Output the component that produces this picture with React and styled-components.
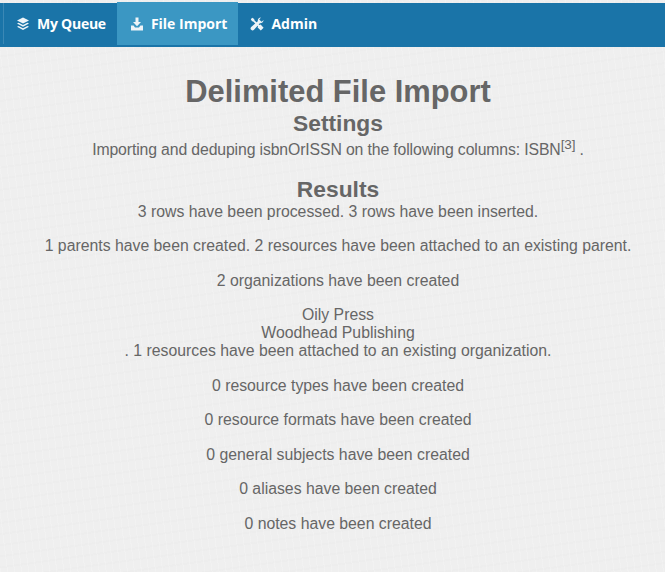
import React from "react"
import styled, { createGlobalStyle } from "styled-components"

const GlobalStyle = createGlobalStyle`
  html, body {
    margin: 0;
    padding: 0;
  }

  body {
    background-color: #efefef;
    font-family: "Liberation Sans", Arial, sans-serif;
    color: #666;
  }
`

const Page = styled.div`
  width: 665px;
  height: 572px;
  overflow: hidden;
  padding-top: 3px;
  box-sizing: border-box;
  background-image:
    repeating-linear-gradient(83deg, rgba(255, 255, 255, 0.16) 0 1px, transparent 1px 7px),
    repeating-linear-gradient(172deg, rgba(0, 0, 0, 0.008) 0 2px, transparent 2px 11px);
`

const NavBar = styled.nav`
  display: flex;
  height: 44px;
  padding-left: 3px;
  box-sizing: border-box;
  background-color: #1a74a8;
`

const NavItem = styled.a`
  display: flex;
  align-items: center;
  gap: 7px;
  height: ${(props) => (props.$active ? "43px" : "41px")};
  margin-top: ${(props) => (props.$active ? "-1px" : "0")};
  padding: 0 11px 0 ${(props) => props.$left}px;
  box-sizing: border-box;
  font-family: "Open Sans", sans-serif;
  font-size: 14px;
  font-weight: 700;
  letter-spacing: ${(props) => (props.$first ? "-0.25px" : "0")};
  color: #fff;
  background-color: ${(props) => (props.$active ? "#3b97c3" : "transparent")};
  border-left: ${(props) => (props.$first ? "1px solid #3b88b5" : "0")};

  svg {
    width: 14px;
    height: 14px;
    fill: #eef4f8;
    flex-shrink: 0;
  }
`

const Content = styled.main`
  text-align: center;
  padding: 27px 0 0 11px;
`

const Title = styled.h1`
  margin: 0;
  font-size: 30.9px;
  line-height: 36px;
  font-weight: 700;
`

const SectionTitle = styled.h2`
  margin: 0;
  font-size: 22.8px;
  line-height: ${(props) => props.$lineHeight}px;
  font-weight: 700;
`

const Paragraph = styled.p`
  margin: 0 0 16.5px;
  font-size: 15.8px;
  line-height: 18px;
  letter-spacing: ${(props) => (props.$tight ? "-0.13px" : "0")};
`

const Sup = styled.sup`
  font-size: 13.5px;
`

const LayersIcon = () => (
  <svg viewBox="0 0 14 14">
    <path d="M7 0.5 13 3.5 7 6.6 1 3.5Z" />
    <path d="M2.6 5.7 7 8 11.4 5.7 13 6.6 7 9.8 1 6.6Z" />
    <path d="M2.6 8.9 7 11.2 11.4 8.9 13 9.8 7 13 1 9.8Z" />
  </svg>
)

const ImportIcon = () => (
  <svg viewBox="0 0 14 14">
    <path d="M5.5 0.5H8.5V5H11L7 9.2 3 5H5.5Z" />
    <path d="M1 8.5H3.6L5 10.6H9L10.4 8.5H13V13.5H1Z" />
  </svg>
)

const ToolsIcon = () => (
  <svg viewBox="0 0 14 14">
    <path d="M0.8 2.2 2.2 0.8 4.2 2 4.4 3.2 9.2 8 10.6 7.6 13.6 10.8 10.8 13.6 7.6 10.6 8 9.2 3.2 4.4 2 4.2Z" />
    <path d="M13.6 3A3.4 3.4 0 0 1 9.8 6.2L4 12.8A1.8 1.8 0 0 1 1.2 10L7.8 4.2A3.4 3.4 0 0 1 11 0.4L9.2 2.4 11.6 4.8Z" />
  </svg>
)

const App = () => {
  return (
    <Page>
      <GlobalStyle />
      <NavBar>
        <NavItem $first $left={12}>
          <LayersIcon />
          My Queue
        </NavItem>
        <NavItem $active $left={13}>
          <ImportIcon />
          File Import
        </NavItem>
        <NavItem $left={12}>
          <ToolsIcon />
          Admin
        </NavItem>
      </NavBar>
      <Content>
        <Title>Delimited File Import</Title>
        <SectionTitle $lineHeight={26}>Settings</SectionTitle>
        <Paragraph $tight>
          Importing and deduping isbnOrISSN on the following columns: ISBN
          <Sup>[3]</Sup> .
        </Paragraph>
        <SectionTitle $lineHeight={27}>Results</SectionTitle>
        <Paragraph>3 rows have been processed. 3 rows have been inserted.</Paragraph>
        <Paragraph>
          1 parents have been created. 2 resources have been attached to an
          existing parent.
        </Paragraph>
        <Paragraph>2 organizations have been created</Paragraph>
        <Paragraph>
          Oily Press
          <br />
          Woodhead Publishing
          <br />. 1 resources have been attached to an existing organization.
        </Paragraph>
        <Paragraph>0 resource types have been created</Paragraph>
        <Paragraph>0 resource formats have been created</Paragraph>
        <Paragraph>0 general subjects have been created</Paragraph>
        <Paragraph>0 aliases have been created</Paragraph>
        <Paragraph>0 notes have been created</Paragraph>
      </Content>
    </Page>
  )
}

export default App
